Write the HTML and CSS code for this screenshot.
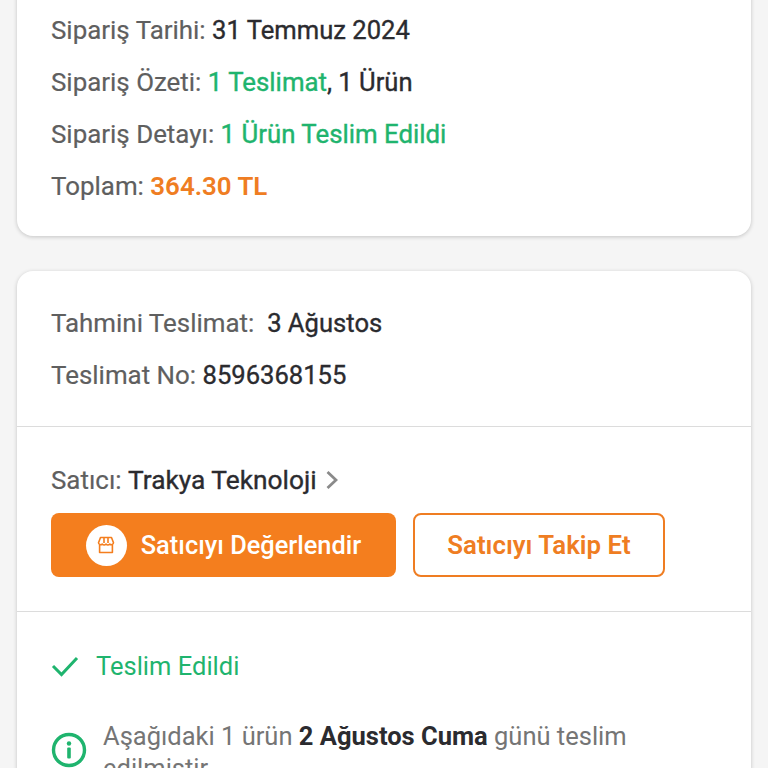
FILE: index.html
```html
<!DOCTYPE html>
<html lang="tr">
<head>
  <meta charset="UTF-8">
  <meta name="viewport" content="width=device-width, initial-scale=1.0">
  <title>Sipariş Detayı</title>
  <link rel="stylesheet" href="styles.css">
</head>
<body>
  <div class="page">
    <section class="card card-summary">
      <p class="row"><span class="label">Sipariş Tarihi:</span> <span class="value">31 Temmuz 2024</span></p>
      <p class="row"><span class="label">Sipariş Özeti:</span> <span class="green">1 Teslimat</span><span class="value">, 1 Ürün</span></p>
      <p class="row"><span class="label">Sipariş Detayı:</span> <span class="green">1 Ürün Teslim Edildi</span></p>
      <p class="row"><span class="label">Toplam:</span> <span class="total">364.30 TL</span></p>
    </section>

    <section class="card">
      <div class="block block-delivery">
        <p class="row"><span class="label">Tahmini Teslimat:</span>&nbsp; <span class="value">3 Ağustos</span></p>
        <p class="row"><span class="label">Teslimat No:</span> <span class="value">8596368155</span></p>
      </div>

      <div class="block block-seller">
        <p class="seller"><span class="label">Satıcı:</span> <span class="seller-name">Trakya Teknoloji</span>
          <svg class="chevron" width="12" height="20" viewBox="0 0 12 20" fill="none" stroke="#8a8a8a" stroke-width="2.8">
            <path d="M1.5 2l8.500 8-8.500 8"/>
          </svg>
        </p>
        <div class="actions">
          <button class="btn btn-primary">
            <span class="btn-icon">
              <svg width="20" height="20" viewBox="0 0 20 20" fill="none" stroke="#f47e1e" stroke-width="1.6" stroke-linejoin="round">
                <path d="M4.500 2.500h11l2 5.200a2.200 2.200 0 0 1-3.700 1.400 2.600 2.600 0 0 1-3.800 0 2.600 2.600 0 0 1-3.800 0 2.200 2.200 0 0 1-3.700-1.400z"/>
                <path d="M8 3v5M12 3v5"/>
                <path d="M3.600 10v7.500h12.800V10"/>
              </svg>
            </span>
            Satıcıyı Değerlendir
          </button>
          <button class="btn btn-outline">Satıcıyı Takip Et</button>
        </div>
      </div>

      <div class="block-status">
        <div class="status">
          <svg width="28" height="22" viewBox="0 0 28 22" fill="none" stroke="#1fb46e" stroke-width="3">
            <path d="M2 11l8.500 8.500L26 3"/>
          </svg>
          <span>Teslim Edildi</span>
        </div>
        <div class="notice">
          <svg class="notice-icon" width="36" height="36" viewBox="0 0 36 36" fill="none">
            <circle cx="18" cy="18" r="15.500" stroke="#1fb46e" stroke-width="3.400"/>
            <circle cx="18" cy="11.500" r="2.200" fill="#1fb46e"/>
            <rect x="16.200" y="15.500" width="3.600" height="11" rx="1" fill="#1fb46e"/>
          </svg>
          <p>Aşağıdaki 1 ürün <strong>2 Ağustos Cuma</strong> günü teslim edilmiştir.</p>
        </div>
      </div>
    </section>
  </div>
</body>
</html>
```

FILE: styles.css
```css
html, body {
  margin: 0;
  height: 100%;
  overflow: hidden;
}

body {
  font-family: Roboto, "Noto Sans", sans-serif;
  background-color: #f5f5f5;
  color: #2b2b2f;
}

p {
  margin: 0;
}

.page {
  padding: 0 17px;
}

.card {
  background-color: #fff;
  border-radius: 16px;
  box-shadow: 0 1px 4px rgba(0, 0, 0, 0.2);
  margin-bottom: 35px;
}

.card-summary {
  margin-top: -20px;
  padding: 24px 34px 24px;
}

.row {
  font-size: 25.9px;
  line-height: 52px;
}

.label {
  color: #5f5f5f;
  -webkit-text-stroke: 0.2px;
}

.value {
  font-size: 25.6px;
  line-height: 1;
  -webkit-text-stroke: 0.35px;
}

.green {
  color: #1fb46e;
  font-size: 25.8px;
  line-height: 1;
  -webkit-text-stroke: 0.4px;
}

.total {
  color: #ef7d22;
  font-weight: 600;
  line-height: 1;
}

.block {
  padding: 0 34px;
  border-bottom: 1px solid #dcdcdc;
}

.block-delivery {
  padding-top: 26px;
  padding-bottom: 25px;
}

.block-seller {
  padding-top: 36px;
  padding-bottom: 34px;
}

.seller {
  font-size: 25.9px;
  line-height: 34px;
  margin-bottom: 16px;
}

.seller-name {
  font-size: 26.3px;
  line-height: 1;
  -webkit-text-stroke: 0.35px;
}

.chevron {
  margin-left: 3px;
  vertical-align: -1px;
}

.actions {
  display: flex;
  gap: 17px;
}

.btn {
  height: 64px;
  border-radius: 8px;
  font-family: inherit;
  font-size: 25.4px;
  font-weight: 500;
  display: flex;
  align-items: center;
  justify-content: center;
  padding: 0;
}

.btn-primary {
  width: 345px;
  gap: 14px;
  background-color: #f47e1e;
  border: none;
  color: #fff;
}

.btn-icon {
  width: 41px;
  height: 41px;
  border-radius: 50%;
  background-color: #fff;
  display: flex;
  align-items: center;
  justify-content: center;
}

.btn-outline {
  width: 252px;
  background-color: #fff;
  border: 2px solid #ef7d22;
  color: #ef7d22;
  font-size: 25.8px;
  font-weight: 600;
}

.block-status {
  padding: 36px 34px 0;
}

.status {
  display: flex;
  align-items: center;
  gap: 17px;
  font-size: 25.5px;
  line-height: 36px;
  color: #1fb46e;
}

.notice {
  display: flex;
  gap: 16px;
  margin-top: 36px;
}

.notice-icon {
  flex: none;
  margin-top: 12px;
}

.notice p {
  font-size: 25.5px;
  line-height: 32px;
  color: #757575;
}

.notice strong {
  color: #2b2b2f;
  font-weight: 700;
}
```
